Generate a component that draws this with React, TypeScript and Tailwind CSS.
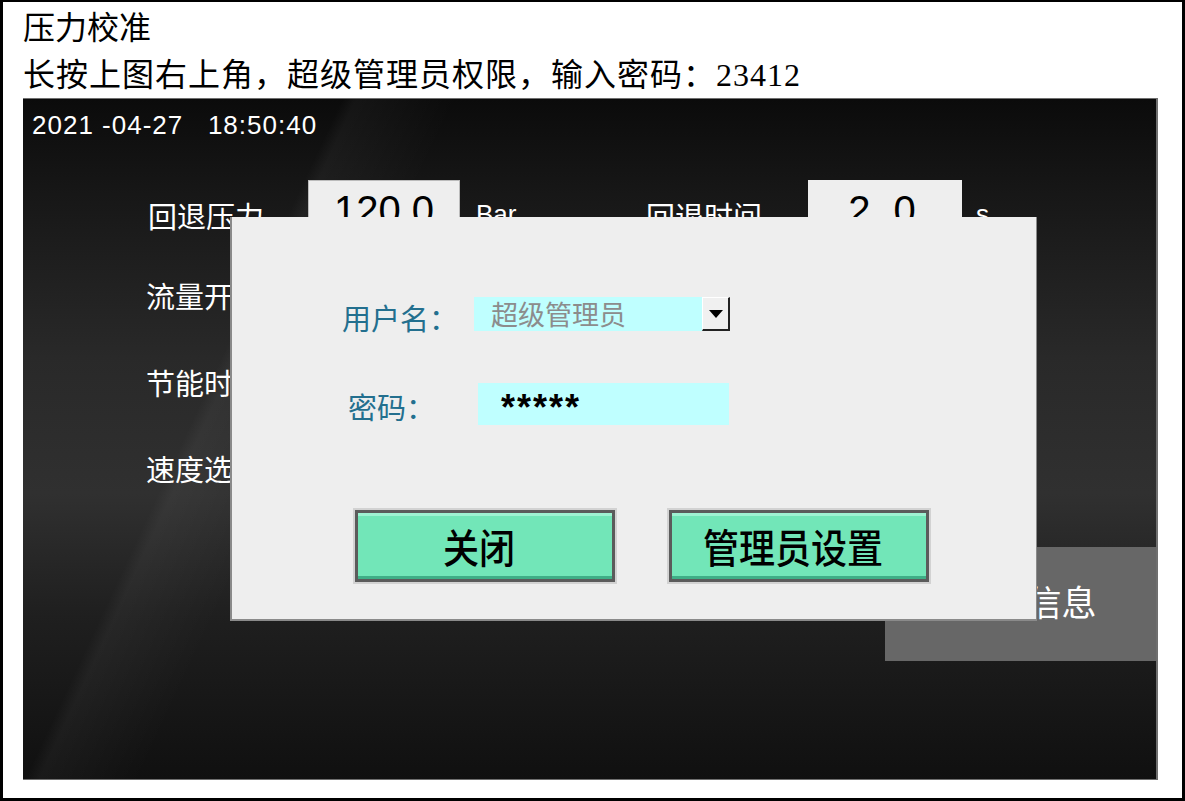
import React from "react";

const rows = ["流量开关", "节能时间", "速度选择"];

function GreenButton({ label }: { label: string }) {
  return (
    <div className="p-[2px] bg-[#d2d2d2]">
      <div className="w-[260px] h-[72px] border-[3px] border-[#5b5b5b] bg-[#72e6b8] shadow-[inset_0_3px_0_#9ff2d2,inset_0_-3px_0_#3fae86] flex items-center justify-center pr-[12px]">
        <span className="text-[40px] leading-none text-black font-medium font-['Noto_Sans_CJK_SC',sans-serif] scale-x-90">
          {label}
        </span>
      </div>
    </div>
  );
}

function LoginDialog() {
  return (
    <div className="absolute left-[207px] top-[118px] w-[807px] h-[404px] bg-[#eeeeee] border-l-2 border-r border-b-2 border-[#8a8a8a] pt-[80px] font-['Noto_Sans_CJK_SC',sans-serif]">
      <div className="flex items-center h-[34px] pl-[110px]">
        <span className="w-[132px] pt-[6px] text-[29px] text-[#236f8e] leading-none">用户名：</span>
        <div className="w-[228px] h-[34px] bg-[#bfffff] pl-[17px] flex items-center text-[27px] text-[#8c8c8c]">
          超级管理员
        </div>
        <div className="w-[28px] h-[34px] bg-[#f0f0f0] border-t border-l border-white border-r-2 border-b-2 border-r-[#222] border-b-[#222] flex items-center justify-center">
          <svg width="14" height="8" viewBox="0 0 14 8">
            <path d="M0 0h14L7 8z" fill="#000" />
          </svg>
        </div>
      </div>

      <div className="flex items-center h-[42px] pl-[116px] mt-[52px]">
        <span className="w-[130px] pt-[4px] text-[29px] text-[#236f8e] leading-none">密码：</span>
        <div className="w-[251px] h-[42px] bg-[#bfffff] pl-[23px] pt-[8px] flex items-center text-[36px] tracking-[2px] font-bold text-black font-['Liberation_Sans',sans-serif]">
          *****
        </div>
      </div>

      <div className="flex gap-[50px] pl-[121px] mt-[83px]">
        <GreenButton label="关闭" />
        <GreenButton label="管理员设置" />
      </div>
    </div>
  );
}

function Screen() {
  return (
    <div className="relative w-[1135px] h-[682px] border-t border-r-2 border-b border-[#6f6f6f] overflow-hidden bg-[linear-gradient(115deg,transparent_0%,transparent_22%,rgba(255,255,255,0.04)_23%,transparent_30%),linear-gradient(180deg,#0b0b0b_0%,#171717_14%,#292929_38%,#303030_58%,#1f1f1f_76%,#101010_100%)] text-white font-['Noto_Sans_CJK_SC',sans-serif] flex flex-col">
      <div className="pt-[10px] pl-[9px] h-[42px] text-[26px] leading-[32px] tracking-[1px] font-['Liberation_Sans',sans-serif] whitespace-pre">
        2021 -04-27   18:50:40
      </div>

      <div className="flex items-center h-[60px] mt-[39px]">
        <span className="w-[285px] pl-[125px] pt-[10px] text-[29px] leading-none">回退压力</span>
        <div className="w-[152px] h-[60px] bg-[#eeeeee] border border-[#bbb] text-black text-[40px] font-['Liberation_Sans',sans-serif] flex items-center justify-center">
          120.0
        </div>
        <span className="w-[186px] pl-[16px] pt-[8px] text-[26px] font-['Liberation_Sans',sans-serif]">Bar</span>
        <span className="w-[162px] pt-[10px] text-[29px] leading-none">回退时间</span>
        <div className="w-[154px] h-[60px] bg-[#eeeeee] text-black text-[40px] font-['Liberation_Sans',sans-serif] flex items-center justify-center tracking-[6px]">
          2.0
        </div>
        <span className="pl-[14px] pt-[8px] text-[26px] font-['Liberation_Sans',sans-serif]">s</span>
      </div>

      {rows.map((r, i) => (
        <div
          key={r}
          className={`h-[40px] flex items-center pl-[123px] text-[29px] leading-none ${
            i === 0 ? "mt-[35px]" : i === 1 ? "mt-[47px]" : "mt-[46px]"
          }`}
        >
          {r}
        </div>
      ))}

      <div className="self-end mt-[59px] w-[271px] h-[114px] bg-[#676767] flex items-center justify-center pl-[12px] pb-[8px] text-[35px] leading-none">
        系统信息
      </div>

      <LoginDialog />
    </div>
  );
}

export default function App() {
  return (
    <div className="w-[1185px] h-[801px] bg-white border-l-[3px] border-t-2 border-r-[3px] border-b-[3px] border-black pl-[20px] font-['Liberation_Serif','Noto_Sans_CJK_SC',serif] text-black">
      <p className="h-[48px] pt-[6px] text-[32px] leading-[40px]">压力校准</p>
      <p className="h-[48px] pt-[5px] text-[32px] leading-[40px] tracking-[1px]">长按上图右上角，超级管理员权限，输入密码：23412</p>
      <Screen />
    </div>
  );
}
